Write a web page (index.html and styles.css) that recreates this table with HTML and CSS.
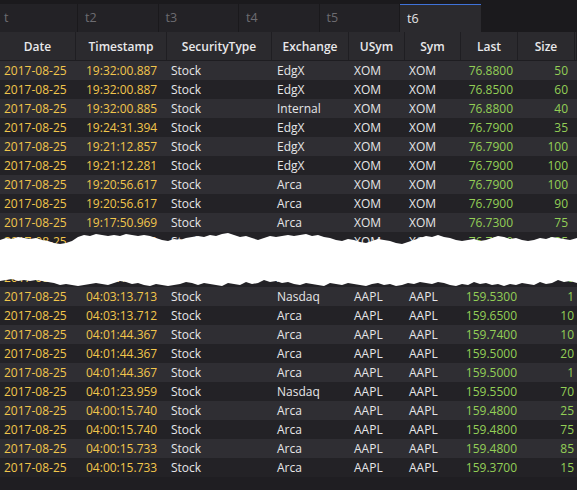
FILE: index.html
```html
<!DOCTYPE html>
<html>
<head>
<meta charset="utf-8">
<link rel="stylesheet" href="styles.css">
</head>
<body>
<div class="app">
  <div class="tabs">
    <div class="tab first">t</div>
    <div class="tab">t2</div>
    <div class="tab">t3</div>
    <div class="tab">t4</div>
    <div class="tab">t5</div>
    <div class="tab active">t6</div>
  </div>

  <section class="grid top">
    <div class="row head">
      <div>Date</div><div>Timestamp</div><div>SecurityType</div><div>Exchange</div><div>USym</div><div>Sym</div><div>Last</div><div>Size</div><div></div>
    </div>
    <div class="row"><div class="c-date">2017-08-25</div><div class="c-ts">19:32:00.887</div><div class="c-st">Stock</div><div class="c-ex">EdgX</div><div class="c-us">XOM</div><div class="c-sy">XOM</div><div class="c-last">76.8800</div><div class="c-size">50</div><div></div></div>
    <div class="row"><div class="c-date">2017-08-25</div><div class="c-ts">19:32:00.887</div><div class="c-st">Stock</div><div class="c-ex">EdgX</div><div class="c-us">XOM</div><div class="c-sy">XOM</div><div class="c-last">76.8500</div><div class="c-size">60</div><div></div></div>
    <div class="row"><div class="c-date">2017-08-25</div><div class="c-ts">19:32:00.885</div><div class="c-st">Stock</div><div class="c-ex">Internal</div><div class="c-us">XOM</div><div class="c-sy">XOM</div><div class="c-last">76.8800</div><div class="c-size">40</div><div></div></div>
    <div class="row"><div class="c-date">2017-08-25</div><div class="c-ts">19:24:31.394</div><div class="c-st">Stock</div><div class="c-ex">EdgX</div><div class="c-us">XOM</div><div class="c-sy">XOM</div><div class="c-last">76.7900</div><div class="c-size">35</div><div></div></div>
    <div class="row"><div class="c-date">2017-08-25</div><div class="c-ts">19:21:12.857</div><div class="c-st">Stock</div><div class="c-ex">EdgX</div><div class="c-us">XOM</div><div class="c-sy">XOM</div><div class="c-last">76.7900</div><div class="c-size">100</div><div></div></div>
    <div class="row"><div class="c-date">2017-08-25</div><div class="c-ts">19:21:12.281</div><div class="c-st">Stock</div><div class="c-ex">EdgX</div><div class="c-us">XOM</div><div class="c-sy">XOM</div><div class="c-last">76.7900</div><div class="c-size">100</div><div></div></div>
    <div class="row"><div class="c-date">2017-08-25</div><div class="c-ts">19:20:56.617</div><div class="c-st">Stock</div><div class="c-ex">Arca</div><div class="c-us">XOM</div><div class="c-sy">XOM</div><div class="c-last">76.7900</div><div class="c-size">100</div><div></div></div>
    <div class="row"><div class="c-date">2017-08-25</div><div class="c-ts">19:20:56.617</div><div class="c-st">Stock</div><div class="c-ex">Arca</div><div class="c-us">XOM</div><div class="c-sy">XOM</div><div class="c-last">76.7900</div><div class="c-size">90</div><div></div></div>
    <div class="row"><div class="c-date">2017-08-25</div><div class="c-ts">19:17:50.969</div><div class="c-st">Stock</div><div class="c-ex">Arca</div><div class="c-us">XOM</div><div class="c-sy">XOM</div><div class="c-last">76.7300</div><div class="c-size">75</div><div></div></div>
    <div class="row"><div class="c-date">2017-08-25</div><div class="c-ts">19:17:50.969</div><div class="c-st">Stock</div><div class="c-ex">Arca</div><div class="c-us">XOM</div><div class="c-sy">XOM</div><div class="c-last">76.7300</div><div class="c-size">125</div><div></div></div>
  </section>

  <div class="gap"></div>

  <section class="grid bottom">
    <div class="row"><div class="c-date">2017-08-25</div><div class="c-ts">04:03:14.020</div><div class="c-st">Stock</div><div class="c-ex">Arca</div><div class="c-us">AAPL</div><div class="c-sy">AAPL</div><div class="c-last">159.5300</div><div class="c-size">10</div><div></div></div>
    <div class="row"><div class="c-date">2017-08-25</div><div class="c-ts">04:03:13.713</div><div class="c-st">Stock</div><div class="c-ex">Nasdaq</div><div class="c-us">AAPL</div><div class="c-sy">AAPL</div><div class="c-last">159.5300</div><div class="c-size">1</div><div></div></div>
    <div class="row"><div class="c-date">2017-08-25</div><div class="c-ts">04:03:13.712</div><div class="c-st">Stock</div><div class="c-ex">Arca</div><div class="c-us">AAPL</div><div class="c-sy">AAPL</div><div class="c-last">159.6500</div><div class="c-size">10</div><div></div></div>
    <div class="row"><div class="c-date">2017-08-25</div><div class="c-ts">04:01:44.367</div><div class="c-st">Stock</div><div class="c-ex">Arca</div><div class="c-us">AAPL</div><div class="c-sy">AAPL</div><div class="c-last">159.7400</div><div class="c-size">10</div><div></div></div>
    <div class="row"><div class="c-date">2017-08-25</div><div class="c-ts">04:01:44.367</div><div class="c-st">Stock</div><div class="c-ex">Arca</div><div class="c-us">AAPL</div><div class="c-sy">AAPL</div><div class="c-last">159.5000</div><div class="c-size">20</div><div></div></div>
    <div class="row"><div class="c-date">2017-08-25</div><div class="c-ts">04:01:44.367</div><div class="c-st">Stock</div><div class="c-ex">Arca</div><div class="c-us">AAPL</div><div class="c-sy">AAPL</div><div class="c-last">159.5000</div><div class="c-size">1</div><div></div></div>
    <div class="row"><div class="c-date">2017-08-25</div><div class="c-ts">04:01:23.959</div><div class="c-st">Stock</div><div class="c-ex">Nasdaq</div><div class="c-us">AAPL</div><div class="c-sy">AAPL</div><div class="c-last">159.5500</div><div class="c-size">70</div><div></div></div>
    <div class="row"><div class="c-date">2017-08-25</div><div class="c-ts">04:00:15.740</div><div class="c-st">Stock</div><div class="c-ex">Arca</div><div class="c-us">AAPL</div><div class="c-sy">AAPL</div><div class="c-last">159.4800</div><div class="c-size">25</div><div></div></div>
    <div class="row"><div class="c-date">2017-08-25</div><div class="c-ts">04:00:15.740</div><div class="c-st">Stock</div><div class="c-ex">Arca</div><div class="c-us">AAPL</div><div class="c-sy">AAPL</div><div class="c-last">159.4800</div><div class="c-size">75</div><div></div></div>
    <div class="row"><div class="c-date">2017-08-25</div><div class="c-ts">04:00:15.733</div><div class="c-st">Stock</div><div class="c-ex">Arca</div><div class="c-us">AAPL</div><div class="c-sy">AAPL</div><div class="c-last">159.4800</div><div class="c-size">85</div><div></div></div>
    <div class="row"><div class="c-date">2017-08-25</div><div class="c-ts">04:00:15.733</div><div class="c-st">Stock</div><div class="c-ex">Arca</div><div class="c-us">AAPL</div><div class="c-sy">AAPL</div><div class="c-last">159.3700</div><div class="c-size">15</div><div></div></div>
  </section>

  <svg class="tear" viewBox="0 0 577 490" width="577" height="490" aria-hidden="true">
    <polygon fill="#ffffff" points="0,240 6,238 12,239 18,237 24,238 30,239 36,238 42,240 48,241 54,243 60,244 66,243 72,241 78,237 84,235 90,236 96,234 102,235 108,236 114,235 120,236 126,234 132,235 138,236 144,235 150,236 156,238 162,240 168,241 174,239 180,240 186,238 192,237 198,236 204,237 210,235 216,236 222,234 228,233 234,235 240,237 246,236 252,238 258,240 264,238 270,236 276,237 282,236 288,235 294,236 300,235 306,234 312,236 318,235 324,237 330,238 336,240 342,241 348,239 354,240 360,242 366,243 372,241 378,239 384,240 390,241 396,243 402,244 408,242 414,240 420,238 426,236 432,237 438,235 444,237 450,238 456,240 462,241 468,240 474,239 480,241 486,240 492,238 498,236 504,237 510,239 516,238 522,240 528,241 534,240 540,238 546,239 552,237 558,238 564,239 570,240 577,238 577,283 570,281 564,282 558,280 552,283 546,284 540,282 534,285 528,284 522,283 516,285 510,284 504,286 498,284 492,285 486,283 480,284 474,282 468,285 462,284 456,286 450,285 444,283 438,282 432,284 426,283 420,282 414,284 408,283 402,285 396,286 390,284 384,285 378,283 372,284 366,286 360,285 354,284 348,283 342,285 336,284 330,283 324,286 318,285 312,284 306,283 300,285 294,284 288,282 282,283 276,281 270,282 264,280 258,283 252,284 246,282 240,285 234,284 228,283 222,286 216,285 210,284 204,283 198,285 192,283 186,282 180,284 174,285 168,286 162,285 156,284 150,286 144,285 138,283 132,284 126,282 120,281 114,283 108,285 102,284 96,283 90,284 84,285 78,286 72,285 66,284 60,285 54,283 48,282 42,281 36,280 30,281 24,280 18,281 12,279 6,280 0,281"/>
  </svg>
</div>
</body>
</html>
```

FILE: styles.css
```css
html, body {
  margin: 0;
  padding: 0;
  background: #1f1e22;
  overflow: hidden;
}

.app {
  position: relative;
  width: 577px;
  height: 490px;
  overflow: hidden;
  font-family: "Open Sans", "Noto Sans", sans-serif;
  font-size: 12px;
  font-weight: 500;
  color: #e6e6e8;
}

/* tabs */
.tabs {
  display: flex;
  height: 32px;
  padding-top: 4px;
  box-sizing: border-box;
  background: #1b1a1d;
}

.tab {
  flex: 0 0 80.5px;
  box-sizing: border-box;
  padding-left: 7px;
  line-height: 28px;
  font-size: 12.5px;
  font-weight: 400;
  color: #6d6c71;
  background: #232226;
  border-right: 1px solid #1a191c;
}

.tab.first {
  flex-basis: 78px;
  padding-left: 4px;
}

.tab.active {
  color: #e4e4e6;
  background: #2b2a2e;
  border-top: 1px solid #3f72d9;
  border-right: none;
  line-height: 27px;
}

/* grid */
.grid {
  display: flex;
  flex-direction: column;
}

.row {
  display: grid;
  height: 19px;
  line-height: 19px;
  white-space: nowrap;
}

.top .row {
  grid-template-columns: 76px 91px 105px 77px 56px 56px 57px 57px 1fr;
}

.bottom .row {
  grid-template-columns: 76px 91px 105px 77px 56px 56px 61px 57px 1fr;
}

.row > div {
  overflow: hidden;
}

.top .row:nth-child(even) { background: #2f2e33; }
.top .row:nth-child(odd)  { background: #232226; }
.bottom .row:nth-child(even) { background: #2f2e33; }
.bottom .row:nth-child(odd)  { background: #232226; }

.top .row.head {
  height: 29px;
  line-height: 30px;
  background: #2b2a2e;
  border-bottom: 1px solid #1e1d21;
  box-sizing: border-box;
}

.row.head > div {
  text-align: center;
  font-weight: 600;
  color: #e8e8ea;
  border-right: 1px solid #1f1e22;
}

.c-date { padding-left: 4px; color: #f2c64c; }
.c-ts { padding-left: 10px; color: #f2c64c; }
.c-st { padding-left: 4px; }
.c-ex { padding-left: 5px; }
.c-us { padding-left: 5px; }
.c-sy { padding-left: 4px; }
.c-last { text-align: right; padding-right: 5px; color: #93cf56; }
.c-size { text-align: right; padding-right: 7px; color: #93cf56; }
.bottom .c-size { padding-right: 5px; }

.gap {
  height: 17px;
  background: #232226;
}

.tear {
  position: absolute;
  left: 0;
  top: 0;
  pointer-events: none;
}
```
